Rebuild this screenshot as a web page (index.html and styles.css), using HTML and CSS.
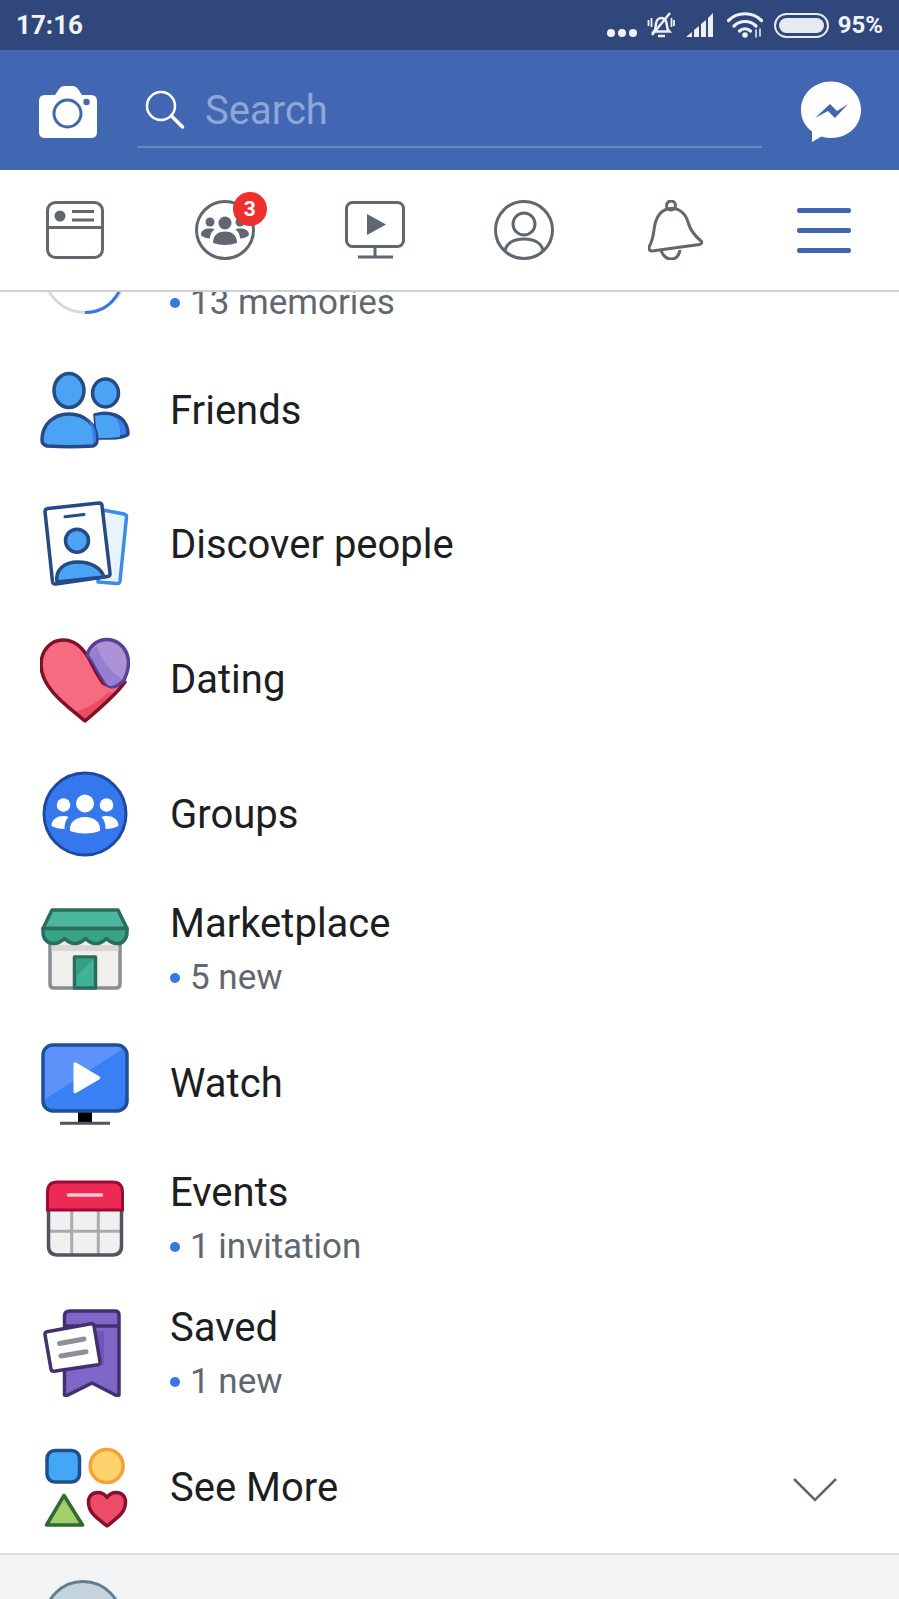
FILE: index.html
```html
<!DOCTYPE html>
<html lang="en">
<head>
<meta charset="UTF-8">
<title>Facebook menu</title>
<link rel="stylesheet" href="styles.css">
</head>
<body>
<div class="app">

  <!-- status bar -->
  <div class="status">
    <span class="time">17:16</span>
    <div class="status-right">
      <svg class="st-dots" width="30" height="10" viewBox="0 0 30 10"><circle cx="4" cy="5" r="4" fill="#f2f3f7"/><circle cx="15" cy="5" r="4" fill="#f2f3f7"/><circle cx="26" cy="5" r="4" fill="#f2f3f7"/></svg>
      <svg class="st-bell" width="28" height="26" viewBox="0 0 28 26" fill="none" stroke="#eef0f6" stroke-width="2.500"><path d="M7 19.500c2-2 1.500-5 2-8 .6-3.500 3-5.500 5.500-5.500s4.500 2 5 5l1 6 2 2.500z"/><path d="M11 24h7"/><path d="M5 23L23 1"/><path d="M1.500 8v6M4.500 6v9M24.500 6v9M27 8v6" stroke-width="1.800"/></svg>
      <svg class="st-signal" width="28" height="24" viewBox="0 0 28 24" fill="#eef0f6"><path d="M0 24l6-5v5zM8 17l5-4v11H8zM15 11l5-4v17h-5zM22 5l5-5v24h-5z"/></svg>
      <svg class="st-wifi" width="36" height="26" viewBox="0 0 36 26" fill="none" stroke="#eef0f6" stroke-width="3.200" stroke-linecap="round"><path d="M1.500 8.500c9-9 24-9 33 0"/><path d="M7 14c6-6 16-6 22 0"/><path d="M12.500 19c3-3 8-3 11 0"/><circle cx="18" cy="23" r="2.800" fill="#eef0f6" stroke="none"/><path d="M29 18v7M33 17v7" stroke-width="1.500"/></svg>
      <div class="battery"><div class="battery-fill"></div></div>
      <span class="pct">95%</span>
    </div>
  </div>

  <!-- blue header with search -->
  <div class="topbar">
    <svg class="camera" width="58" height="52" viewBox="0 0 58 52"><path d="M6 9h10l4-6q2-3 5-3h9q3 0 5 3l4 6h9q6 0 6 6v31q0 6-6 6H6q-6 0-6-6V15q0-6 6-6z" fill="#fff"/><circle cx="28.500" cy="27.500" r="13.500" fill="none" stroke="#4267b2" stroke-width="3"/><circle cx="47.500" cy="16" r="3.200" fill="#4267b2"/></svg>
    <div class="search">
      <svg width="40" height="40" viewBox="0 0 40 40" fill="none" stroke="#fff" stroke-width="2.500" stroke-linecap="round"><circle cx="16" cy="16" r="14"/><path d="M26.500 26l11 11" stroke-width="3.500"/></svg>
      <span class="search-text">Search</span>
    </div>
    <svg class="messenger" width="62" height="62" viewBox="0 0 62 62"><path d="M31 .5C14 .5 1 13 1 29c0 9 4 16.500 11 21.500V61l9.500-5.500Q26 57 31 57c17 0 30-12 30-28S48 .5 31 .5z" fill="#fff"/><path d="M15 37l15-14 7 7 11-7-13 14-7-7z" fill="#4267b2"/></svg>
  </div>

  <!-- tab icons -->
  <div class="tabs">
    <div class="tab">
      <svg width="58" height="58" viewBox="0 0 58 58" fill="none" stroke="#606770" stroke-width="3"><rect x="1.500" y="1.500" width="55" height="55" rx="8"/><path d="M1.500 26.500h55"/><circle cx="14" cy="15" r="5.500" fill="#606770" stroke="none"/><path d="M26 10.500h22M26 19h22" stroke-width="3"/></svg>
    </div>
    <div class="tab">
      <svg width="62" height="62" viewBox="0 0 62 62" fill="none" stroke="#606770" stroke-width="3"><circle cx="31" cy="31" r="28.500"/><g fill="#606770" stroke="none"><circle cx="31" cy="24" r="6.500"/><circle cx="16" cy="23" r="4.500"/><circle cx="46" cy="23" r="4.500"/><path d="M19 44c0-9 6-11.500 12-11.500S43 35 43 44q-12 4-24 0z"/><path d="M7 36c0-5 4-6.500 9-6.500 2 0 3.500.3 4.500 1-3 2-4.500 5-4.500 9-4 0-7-1.500-9-3.500z"/><path d="M55 36c0-5-4-6.500-9-6.500-2 0-3.500.3-4.500 1 3 2 4.500 5 4.500 9 4 0 7-1.500 9-3.500z"/></g></svg>
      <span class="badge">3</span>
    </div>
    <div class="tab">
      <svg width="60" height="58" viewBox="0 0 60 58" fill="none" stroke="#606770" stroke-width="3"><rect x="1.500" y="1.500" width="57" height="44" rx="6"/><path d="M30 46v9"/><path d="M13 56h35" stroke-width="3"/><path d="M22 13l19 10.500L22 34z" fill="#606770" stroke="none"/></svg>
    </div>
    <div class="tab">
      <svg width="60" height="60" viewBox="0 0 60 60" fill="none" stroke="#606770" stroke-width="3"><circle cx="30" cy="30" r="28.500"/><circle cx="30" cy="24" r="11"/><path d="M11 51c1-8 9-12 19-12s18 4 19 12"/></svg>
    </div>
    <div class="tab tab-bell">
      <svg width="56" height="60" viewBox="0 0 56 60" fill="none" stroke="#606770" stroke-width="3" stroke-linejoin="round"><circle cx="23" cy="5.500" r="4.500"/><path d="M4 51c-3 0-3.500-3-2.500-5 3-5 3.500-9 4.500-16C7.500 17 13 9 23 8.500c9-.5 15 6 17.500 15 2 7 6 12 12 17 2 1.500 1.500 3.500-1 4z"/><path d="M13 50c1.500 6 6 9 10 9 5 0 8-3 9-9"/></svg>
    </div>
    <div class="tab">
      <div class="burger"><i></i><i></i><i></i></div>
    </div>
  </div>

  <!-- menu list, scrolled so the first row is cut off -->
  <div class="list">
    <div class="row row-cut">
      <div class="row-icon">
        <svg width="90" height="90" viewBox="0 0 90 90" fill="none" stroke-width="3"><circle cx="45" cy="41.500" r="41" stroke="#d3d9e0"/><path d="M45 82.500c15 0 28-7 36-25" stroke="#3578e5"/></svg>
      </div>
      <div class="row-text">
        <div class="label">&nbsp;</div>
        <div class="sub"><i class="dot"></i>13 memories</div>
      </div>
    </div>

    <div class="row">
      <div class="row-icon">
        <svg width="90" height="90" viewBox="0 0 90 90" stroke="#254a85" stroke-width="3.500"><path d="M55 50c6-2 14-2 20 0 8 3 13 10 13 19 0 2-9 4-18 4H57z" fill="#3d7df0"/><path d="M55 51c6-1.500 13-1.500 17 0 6 3 9 10 8 21-8 1-14 1-23 1z" fill="#4aa3f5" stroke="none"/><ellipse cx="65.500" cy="28" rx="13" ry="14" fill="#4aa3f5"/><ellipse cx="29" cy="25.500" rx="15" ry="17" fill="#4aa3f5"/><path d="M2 75c0-16 12-26 27-26s28 10 28 26c0 3-1 5-4 6-15 1-30 1-46 0-3-1-5-3-5-6z" fill="#4aa3f5"/><path d="M45 52c6 5 8 12 8 27l3-3c1-12-4-20-11-24z" fill="#3d7df0" stroke="none"/></svg>
      </div>
      <div class="row-text"><div class="label">Friends</div></div>
    </div>

    <div class="row">
      <div class="row-icon">
        <svg width="90" height="90" viewBox="0 0 90 90" stroke-linejoin="round"><path d="M63 11l21 4q3 1 2.500 3L80 82q-.5 3-3 2.500L58 83z" fill="#e9f3fb" stroke="#3a8ee6" stroke-width="3.500"/><path d="M8 9.500L59 4q3 0 3 3l8 67q.5 3-2.500 3.500L16 85q-3 .5-3.500-2.500L5 12.500Q5 10 8 9.500z" fill="#fff" stroke="#264a85" stroke-width="3.500"/><path d="M25 17.800l19-2.400" stroke="#264a85" stroke-width="3" stroke-linecap="round"/><circle cx="37" cy="41.700" r="11.500" fill="#4aa3f5" stroke="#264a85" stroke-width="3.500"/><path d="M17 83c-2-12 7-20 21-20 13 0 23 6 26 15z" fill="#4aa3f5" stroke="#264a85" stroke-width="3.500"/></svg>
      </div>
      <div class="row-text"><div class="label">Discover people</div></div>
    </div>

    <div class="row">
      <div class="row-icon">
        <svg width="90" height="90" viewBox="0 0 90 90" stroke-width="3.500" stroke-linejoin="round"><path d="M45 87C30 74 1 55 1 31 1 16 11 6 23 6c11 0 18 6 25 17 4 7 8 17 15 26 6 5 16 2 22-1C75 62 58 76 45 87z" fill="#f56b7f"/><path d="M45 85c-5-3-7-5-10-7 14-4 25-11 33-20 4 2 9 1 15-7C75 62 58 74 45 85z" fill="#ec4c62"/><path d="M45 87C30 74 1 55 1 31 1 16 11 6 23 6c11 0 18 6 25 17 4 7 8 17 15 26 6 5 16 2 22-1C75 62 58 76 45 87z" fill="none" stroke="#7d1126"/><path d="M47 21C50 11 58 5.500 67 5.500 80 5.500 88.500 17 88.500 29c0 7-3 14-5 18-8 6-14 10-20-1-6-9-10-19-16-25z" fill="#ab93d6" stroke="#5b3f9a"/><path d="M49 21c3-5 5-7 8-9 4 14 13 25 25 33-6 7-13 11-18 1-6-9-10-18-15-25z" fill="#9580cf"/></svg>
      </div>
      <div class="row-text"><div class="label">Dating</div></div>
    </div>

    <div class="row">
      <div class="row-icon">
        <svg width="90" height="90" viewBox="0 0 90 90"><circle cx="45" cy="45" r="41" fill="#3578ee" stroke="#1c4aa3" stroke-width="3"/><g fill="#fff"><circle cx="45" cy="34.500" r="9"/><circle cx="23.500" cy="36" r="6.800"/><circle cx="66.500" cy="36" r="6.800"/><path d="M30 62c-1-9 6-14 15-14s16 5 15 14q-15 5-30 0z"/><path d="M11.500 57c0-7 6-10 12-10 2 0 3.500.3 5 1-3 3-4 7-4 12-5 0-9-1-13-3z"/><path d="M78.500 57c0-7-6-10-12-10-2 0-3.500.3-5 1 3 3 4 7 4 12 5 0 9-1 13-3z"/></g></svg>
      </div>
      <div class="row-text"><div class="label">Groups</div></div>
    </div>

    <div class="row">
      <div class="row-icon">
        <svg width="90" height="90" viewBox="0 0 90 90" stroke-width="3.500" stroke-linejoin="round"><path d="M10 36h70v45q0 4-4 4H14q-4 0-4-4z" fill="#f1efec" stroke="#8a8d94"/><path d="M11.500 42h67v6h-67z" fill="#d9d7d5"/><path d="M34.500 54h21v31h-21z" fill="#40b394" stroke="#2a6d5f"/><path d="M36 55.500h18l-18 18z" fill="#35a083"/><path d="M12 7h66l9 18.500H3z" fill="#4db69e" stroke="#2a6d5f"/><path d="M3 25.500h84v4c0 6-4 11-9.500 11-4.500 0-8-2-11-5-3 3-6.500 5-10.500 5s-7.500-2-10.500-5c-3 3-6.500 5-10.500 5s-7.500-2-10.500-5c-3 3-6.500 5-11 5C7 40.500 3 35.500 3 29.500z" fill="#37a585" stroke="#2a6d5f"/></svg>
      </div>
      <div class="row-text row-two">
        <div class="label">Marketplace</div>
        <div class="sub"><i class="dot"></i>5 new</div>
      </div>
    </div>

    <div class="row">
      <div class="row-icon">
        <svg width="90" height="90" viewBox="0 0 90 90"><path d="M38 73h14v11H38z" fill="#000"/><path d="M20 85.300h50" stroke="#50555f" stroke-width="3"/><rect x="3" y="7" width="84" height="66" rx="10" fill="#3a80f5"/><path d="M4 62V15q0-8 8-8h62q7 0 10 3z" fill="#5b93fa"/><rect x="3" y="7" width="84" height="66" rx="10" fill="none" stroke="#1f4e9a" stroke-width="3.500"/><path d="M34 25.500q0-1.500 2-.5l23.500 14q1 1 0 1.800L36 54.500q-2 1-2-.5z" fill="#fff" stroke="#fff" stroke-width="1"/></svg>
      </div>
      <div class="row-text"><div class="label">Watch</div></div>
    </div>

    <div class="row">
      <div class="row-icon">
        <svg width="90" height="90" viewBox="0 0 90 90"><path d="M8.500 38h73v36q0 9-9 9h-55q-9 0-9-9z" fill="#f0f0f0"/><path d="M8 59.300h74M31.700 38v45M58.300 38v45" stroke="#a8abb0" stroke-width="3"/><path d="M8.500 38v36q0 9 9 9h55q9 0 9-9V38" fill="none" stroke="#50555f" stroke-width="3.500"/><path d="M7.500 38V20q0-10 10-10h55q10 0 10 10v18z" fill="#ec2a55" stroke="#9c0c34" stroke-width="3"/><path d="M28.500 23h33" stroke="#f8c9d2" stroke-width="3.500" stroke-linecap="round"/></svg>
      </div>
      <div class="row-text row-two">
        <div class="label">Events</div>
        <div class="sub"><i class="dot"></i>1 invitation</div>
      </div>
    </div>

    <div class="row">
      <div class="row-icon">
        <svg width="90" height="90" viewBox="0 0 90 90" stroke-linejoin="round"><path d="M30 4h45q4 0 4 4v80l-1.500 1L52 76 26 89l-1.500-1V9q0-5 5.500-5z" fill="#7f67c8" stroke="#43306f" stroke-width="3.500"/><path d="M25 19h54" stroke="#43306f" stroke-width="3.500"/><path d="M40 24h24v34H30z" fill="#6e55b8"/><path d="M7 24.700l44-8q2.500-.4 3 2l6 36q.5 2.500-2 3l-44 6.500q-2.500.4-3-2l-6-34.500q-.5-2.500 2-3z" fill="#fff" stroke="#43306f" stroke-width="3.500"/><path d="M19.500 36.500L44 32M21 49l25-4.300" stroke="#8c8f96" stroke-width="5" stroke-linecap="round"/></svg>
      </div>
      <div class="row-text row-two">
        <div class="label">Saved</div>
        <div class="sub"><i class="dot"></i>1 new</div>
      </div>
    </div>

    <div class="row">
      <div class="row-icon">
        <svg width="90" height="90" viewBox="0 0 90 90" stroke-width="3.500" stroke-linejoin="round"><rect x="7" y="8.500" width="32.500" height="31.500" rx="8" fill="#44a7f5" stroke="#1f4e8c"/><circle cx="66.700" cy="24" r="16.500" fill="#fcd36d" stroke="#f5a13a"/><path d="M24 53.500L42.500 83h-36z" fill="#a2cf6a" stroke="#2f6b33"/><path d="M67 84C57 76 48.500 71 48.500 60c0-6 4-9.500 9-9.500 4 0 7.500 2 9.500 5 2-3 5.500-5 9.500-5 5 0 9 3.500 9 9.500C85.500 71 77 76 67 84z" fill="#ed4c67" stroke="#8a0f2e"/></svg>
      </div>
      <div class="row-text"><div class="label">See More</div></div>
      <svg class="chevron" width="44" height="26" viewBox="0 0 44 26" fill="none" stroke="#606770" stroke-width="2.500"><path d="M1 2l21 21L43 2"/></svg>
    </div>
  </div>

  <!-- next section, grey, starts to show at the bottom -->
  <div class="more">
    <div class="avatar"></div>
  </div>
</div>
</body>
</html>
```

FILE: styles.css
```css
html,body{margin:0;padding:0;background:#fff;}
body{font-family:"Roboto",sans-serif;color:#1c1e21;}
.app{width:899px;height:1599px;overflow:hidden;display:flex;flex-direction:column;}

.status{height:50px;flex:none;background:#2f477a;color:#f2f3f7;display:flex;align-items:center;justify-content:space-between;padding:0 16px;box-sizing:border-box;}
.time{font-size:26px;font-weight:700;}
.status-right{display:flex;align-items:center;}
.st-dots{margin-top:16px;margin-right:10px;}
.st-bell{margin-right:11px;}
.st-signal{margin-right:13px;}
.st-wifi{margin-right:11px;}
.battery{width:55px;height:25px;box-sizing:border-box;border:2px solid #e8eaf2;border-radius:13px;padding:3px;margin-right:9px;}
.battery-fill{height:100%;background:#e8eaf2;border-radius:8px;}
.pct{font-size:24px;font-weight:700;}

.topbar{height:120px;flex:none;background:#4267b2;display:flex;align-items:center;padding:0 37px 0 39px;box-sizing:border-box;}
.camera{flex:none;margin-right:40px;margin-top:3px;}
.search{flex:1;height:64px;padding:0 0 4px 8px;margin-top:6px;margin-right:38px;border-bottom:2px solid #6a87c4;display:flex;align-items:center;}
.search-text{font-size:40px;color:#8fa6d8;margin-left:20px;}
.messenger{flex:none;margin-top:3px;}

.tabs{height:120px;flex:none;background:#fff;display:flex;border-bottom:2px solid #ced0d4;}
.tab{flex:1;display:flex;align-items:center;justify-content:center;position:relative;}
.tab-bell svg{margin-left:4px;}
.burger{width:54px;display:flex;flex-direction:column;gap:15px;}
.burger i{display:block;height:5px;border-radius:2px;background:#4267b2;}
.badge{position:absolute;left:83px;top:22px;width:34px;height:34px;border-radius:50%;background:#f02f2f;color:#fff;font-size:21px;font-weight:700;text-align:center;line-height:34px;}

.list{flex:1;overflow:hidden;background:#fff;}
.row{height:134.6px;display:flex;align-items:center;}
.row-cut{margin-top:-84px;}
.row-icon{width:90px;height:90px;flex:none;margin:0 40px 0 40px;}
.row-icon svg{display:block;}
.row-text{flex:1;padding-top:2px;}
.row-two{padding-top:5px;}
.label{font-size:40px;line-height:54px;color:#1c1e21;}
.sub{font-size:35px;line-height:54px;color:#606770;display:flex;align-items:center;}
.dot{width:10px;height:10px;border-radius:50%;background:#3578e5;margin-right:10px;flex:none;}
.chevron{flex:none;margin:6px 62px 0 0;}

.more{height:44px;flex:none;background:#f2f3f5;border-top:2px solid #dddfe2;overflow:hidden;display:flex;}
.avatar{width:80px;height:80px;box-sizing:border-box;border-radius:50%;background:#c5d3dc;border:3px solid #5d7f93;margin:25px 0 0 43px;flex:none;}
```
